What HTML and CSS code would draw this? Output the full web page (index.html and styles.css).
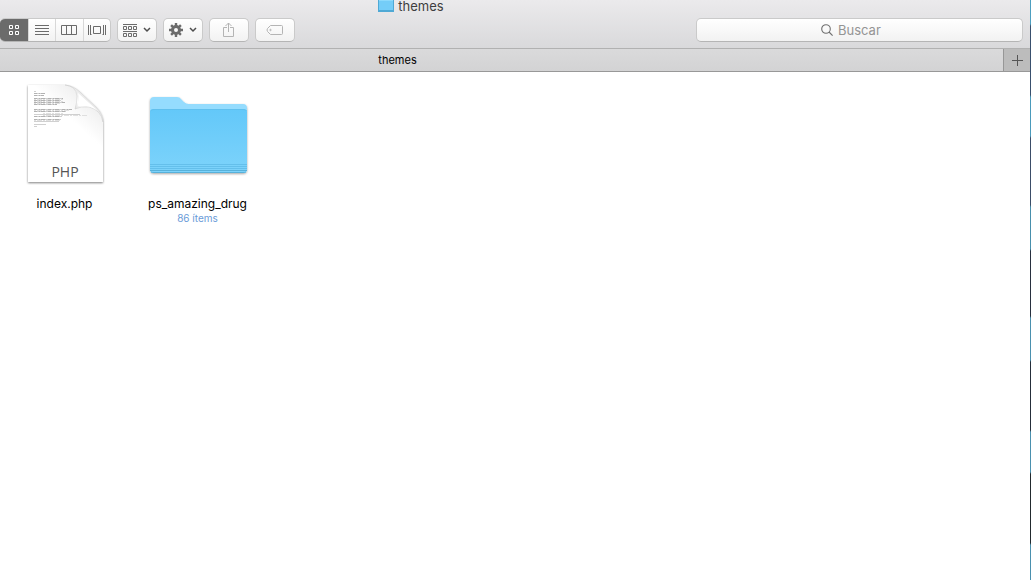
FILE: index.html
```html
<!DOCTYPE html>
<html lang="es">
<head>
<meta charset="utf-8">
<title>themes</title>
<link rel="stylesheet" href="styles.css">
</head>
<body>
<div class="desktop">
<main class="window">
  <header class="titlebar">
    <div class="title">
      <svg width="16" height="12" viewBox="0 0 16 12" aria-hidden="true"><path fill="#4fa9d5" d="M0 0h16v12H0z"/><path fill="#74cdf8" d="M1 1h14v9H1z"/><path fill="#8ddafc" d="M1 0h14v1H1z"/></svg>
      <span>themes</span>
    </div>
    <div class="toolbar">
      <div class="segments">
        <button class="segment active" aria-label="Iconos"><svg width="12" height="12" viewBox="0 0 12 12" fill="none" stroke="#fff"><path d="M1.500 1.500h3v3h-3zM7.500 1.500h3v3h-3zM1.500 7.500h3v3h-3zM7.500 7.500h3v3h-3z"/></svg></button>
        <button class="segment" aria-label="Lista"><svg width="14" height="12" viewBox="0 0 14 12" stroke="#6b6b6b"><path d="M0 1.500h14M0 4.500h14M0 7.500h14M0 10.500h14"/></svg></button>
        <button class="segment" aria-label="Columnas"><svg width="16" height="12" viewBox="0 0 16 12" fill="none" stroke="#6b6b6b"><path d="M.5 1.500h15v9H.5zM5.500 1.500v9M10.500 1.500v9"/></svg></button>
        <button class="segment" aria-label="Cover Flow"><svg width="18" height="12" viewBox="0 0 18 12" fill="none" stroke="#6b6b6b"><path d="M.5 1v10M17.500 1v10M5.500 2.500h7v7h-7zM2 1.500h1M2.500 1v10M2 10.500h1.500M16 1.500h-1M15.500 1v10M16 10.500h-1.500"/></svg></button>
      </div>
      <button class="tool" aria-label="Agrupar"><svg width="14" height="14" viewBox="0 0 14 14" fill="none" stroke="#6b6b6b"><path d="M0 1.500h14M0 8.500h14M.5 3.500h3v3h-3zM5.500 3.500h3v3h-3zM10.500 3.500h3v3h-3zM.5 10.500h3v3h-3zM5.500 10.500h3v3h-3zM10.500 10.500h3v3h-3z"/></svg><svg width="8" height="6" viewBox="0 0 8 6" fill="none" stroke="#4d4d4d" stroke-width="1.500"><path d="M1 1l3 3 3-3"/></svg></button>
      <button class="tool" aria-label="Acciones"><svg width="14" height="14" viewBox="-7 -7 14 14"><circle r="3.500" fill="none" stroke="#6b6b6b" stroke-width="3"/><path stroke="#6b6b6b" stroke-width="2.400" d="M0-7v3M0 7V4M-7 0h3M7 0H4M-4.900-4.900l2 2M4.900-4.900l-2 2M-4.900 4.900l2-2M4.900 4.900l-2-2"/></svg><svg width="8" height="6" viewBox="0 0 8 6" fill="none" stroke="#4d4d4d" stroke-width="1.500"><path d="M1 1l3 3 3-3"/></svg></button>
      <button class="tool" aria-label="Compartir" disabled><svg width="12" height="16" viewBox="0 0 12 16" fill="none" stroke="#b4b4b4"><path d="M4 5.500H.5v9h10v-9H7M5.500 10V1M2.500 4l3-3 3 3"/></svg></button>
      <button class="tool" aria-label="Etiquetas" disabled><svg width="18" height="12" viewBox="0 0 18 12" fill="none" stroke="#b4b4b4"><path d="M4.500 1.500h11q1 0 1 1v7q0 1-1 1h-11L1.500 7.500Q.5 6 1.500 4.500z"/><circle cx="4.500" cy="6" r=".7"/></svg></button>
      <label class="search">
        <svg width="12" height="12" viewBox="0 0 12 12" fill="none" stroke="#6f6f6f" stroke-width="1.100"><circle cx="5" cy="5" r="4.300"/><path d="M8 8l3.600 3.600"/></svg>
        <input type="text" placeholder="Buscar" aria-label="Buscar">
      </label>
    </div>
  </header>
  <nav class="tabs">
    <button class="tab">themes</button>
    <button class="add" aria-label="Nueva pestaña"><svg width="11" height="11" viewBox="0 0 11 11" stroke="#555"><path d="M0 5.500h11M5.500 0v11"/></svg></button>
  </nav>
  <section class="files">
    <figure class="file">
      <svg width="84" height="108" viewBox="0 0 84 108" aria-hidden="true">
        <defs>
          <linearGradient id="page" x1="0" y1="1" x2=".7" y2="0"><stop offset=".7" stop-color="#fff"/><stop offset="1" stop-color="#ececec"/></linearGradient>
          <linearGradient id="curl" gradientUnits="userSpaceOnUse" x1="52" y1="32" x2="70" y2="14"><stop offset="0" stop-color="#cfcfcf"/><stop offset=".35" stop-color="#fff"/><stop offset=".7" stop-color="#e8e8e8"/></linearGradient>
          <filter id="shade" x="-10%" y="-10%" width="120%" height="120%"><feDropShadow dx="0" dy="1" stdDeviation="1.200" flood-opacity=".5"/></filter>
        </defs>
        <path filter="url(#shade)" fill="url(#page)" d="M5 5h37q9 1 15 7l16 15q7 7 7 15v60H5z"/>
        <path fill="url(#curl)" stroke="#cbcbcb" stroke-width=".5" d="M42 5q11 1 12 11 0 7-2 13 6-3 14-2 12 3 14 15 0-8-7-15L57 12Q51 6 42 5z"/>
        <path fill="#fff" d="M55 13l20 18q-8-6-20-5 2-6 0-13z"/>
        <g stroke="#c4c4c4" stroke-width=".8" fill="none">
          <path d="M11 11.500h2M11 13.500h11M11 15.500h10M11 18.500h29M11 20.500h27M11 22.500h31M11 24.500h23M11 29.500h38M11 31.500h32M11 34.500h46M11 36.500h28M11 39.500h27M11 41.500h25M11 44.500h12M11 46.500h3"/>
          <path stroke="#aaa" stroke-dasharray="3 2 1 1 4 3" d="M11 13.500h11M11 15.500h10M11 18.500h29M11 20.500h27M11 22.500h31M11 24.500h23M11 29.500h38M11 31.500h32M11 36.500h28M11 39.500h27"/>
          <path stroke="#d8d8d8" stroke-dasharray="2 1 5 1" d="M11 19.500h29M11 21.500h30M11 23.500h26M11 30.500h36M20 33.500h21M20 35.500h45M11 40.500h26"/>
        </g>
        <text class="filetype" x="42" y="97" text-anchor="middle">PHP</text>
      </svg>
      <figcaption>index.php</figcaption>
    </figure>
    <figure class="file">
      <svg width="104" height="108" viewBox="0 0 104 108" aria-hidden="true">
        <defs>
          <linearGradient id="front" x1="0" y1="0" x2="0" y2="1"><stop offset="0" stop-color="#63c8f9"/><stop offset="1" stop-color="#7dd3fb"/></linearGradient>
          <filter id="drop" x="-5%" y="-5%" width="110%" height="112%"><feDropShadow dx="0" dy="1" stdDeviation="1" flood-opacity=".35"/></filter>
        </defs>
        <path filter="url(#drop)" fill="#95dcfe" d="M4 21q0-4 4-4h23q3 0 4 2l3 3q2 2 5 2h54q4 0 4 4v61q0 4-4 4H8q-4 0-4-4z"/>
        <path fill="url(#front)" d="M4 32q0-3 4-3h89q4 0 4 3v57q0 4-4 4H8q-4 0-4-4z"/>
        <path fill="none" stroke="#60c0ee" d="M4.500 31q1-1.500 3.500-1.500h89q3 0 3.500 1.500"/>
        <path fill="none" stroke="#64bfeb" d="M4 84.500h97M4 86.500h97M4 88.500h97"/>
        <path fill="none" stroke="#58b1da" d="M4 90.500h97M5 92q1 .5 3 .5h89q2 0 3-.5"/>
      </svg>
      <figcaption>ps_amazing_drug<small>86 ítems</small></figcaption>
    </figure>
  </section>
</main>
<div class="wallpaper"></div>
</div>
</body>
</html>
```
FILE: styles.css
```css
:root {
  --title-shift: 208px;
}

* {
  box-sizing: border-box;
}

body {
  margin: 0;
  font: 13px/16px Inter, "Liberation Sans", sans-serif;
  color: #000;
}

button {
  margin: 0;
  padding: 0;
  border: 0;
  font: inherit;
  color: inherit;
}

svg {
  display: block;
  flex: none;
}

.desktop {
  display: flex;
  min-height: 100vh;
}

.window {
  flex: 1;
  background: #fff;
}

.wallpaper {
  width: 1px;
  background: linear-gradient(#4d9fc0 0 24px, #39506e 26px 95px, #4a9abb 97px 136px, #3b4d68 138px 205px, #478fac 207px 249px, #28303f 251px 316px, #4a90ae 318px 360px, #252e3a 362px 430px, #4a90ae 432px 472px, #222a2e 474px 543px, #4a90ae 545px);
}

.titlebar {
  padding-bottom: 6px;
  border-bottom: 1px solid #b1b1b1;
  background: linear-gradient(#ebeaec, #d9d9db);
}

.title {
  display: flex;
  align-items: center;
  justify-content: center;
  gap: 4px;
  height: 12px;
  margin-bottom: 6px;
  padding-right: var(--title-shift);
  color: #3e3e3e;
}

.toolbar {
  display: flex;
  gap: 6px;
  padding-right: 7px;
}

.segments,
.tool,
.search {
  height: 24px;
  border: 1px solid #cacaca;
  border-bottom-color: #b5b5b5;
  border-radius: 5px;
  background: linear-gradient(#fff, #f2f2f2);
}

.segments {
  display: flex;
  width: 111px;
  border-left: 0;
  overflow: hidden;
}

.segment {
  display: flex;
  flex: 1;
  align-items: center;
  justify-content: center;
  border-left: 1px solid #d8d8d8;
  background: none;
}

.segment.active {
  flex: none;
  width: 28px;
  border: 0;
  background: #6b6b6b;
}

.tool {
  display: flex;
  align-items: center;
  justify-content: center;
  gap: 6px;
  width: 40px;
}

.search {
  display: flex;
  flex: 1;
  align-items: center;
  justify-content: center;
  gap: 5px;
  margin-left: auto;
  max-width: 327px;
}

.search input {
  width: 60px;
  padding: 0;
  border: 0;
  outline: 0;
  background: none;
  font: inherit;
}

.search input::placeholder {
  color: #949494;
  opacity: 1;
}

.tabs {
  display: flex;
  height: 23px;
  border-bottom: 1px solid #989898;
}

.tab {
  flex: 1;
  padding-right: var(--title-shift);
  background: linear-gradient(#dadadb, #d3d3d4);
  font-size: 11px;
}

.add {
  display: flex;
  align-items: center;
  justify-content: center;
  width: 27px;
  border-left: 1px solid #979797;
  background: #bcbcbc;
}

.files {
  display: flex;
  gap: 16px;
  padding: 8px 6px;
}

.file {
  display: flex;
  flex-direction: column;
  align-items: center;
  gap: 8px;
  width: 117px;
  margin: 0;
}

.file figcaption {
  font-size: 12px;
  text-align: center;
}

.file small {
  display: block;
  font-size: 10px;
  line-height: 12px;
  color: #6a9bd8;
}

.filetype {
  font: 14px "Open Sans", sans-serif;
  fill: #555;
}
```
